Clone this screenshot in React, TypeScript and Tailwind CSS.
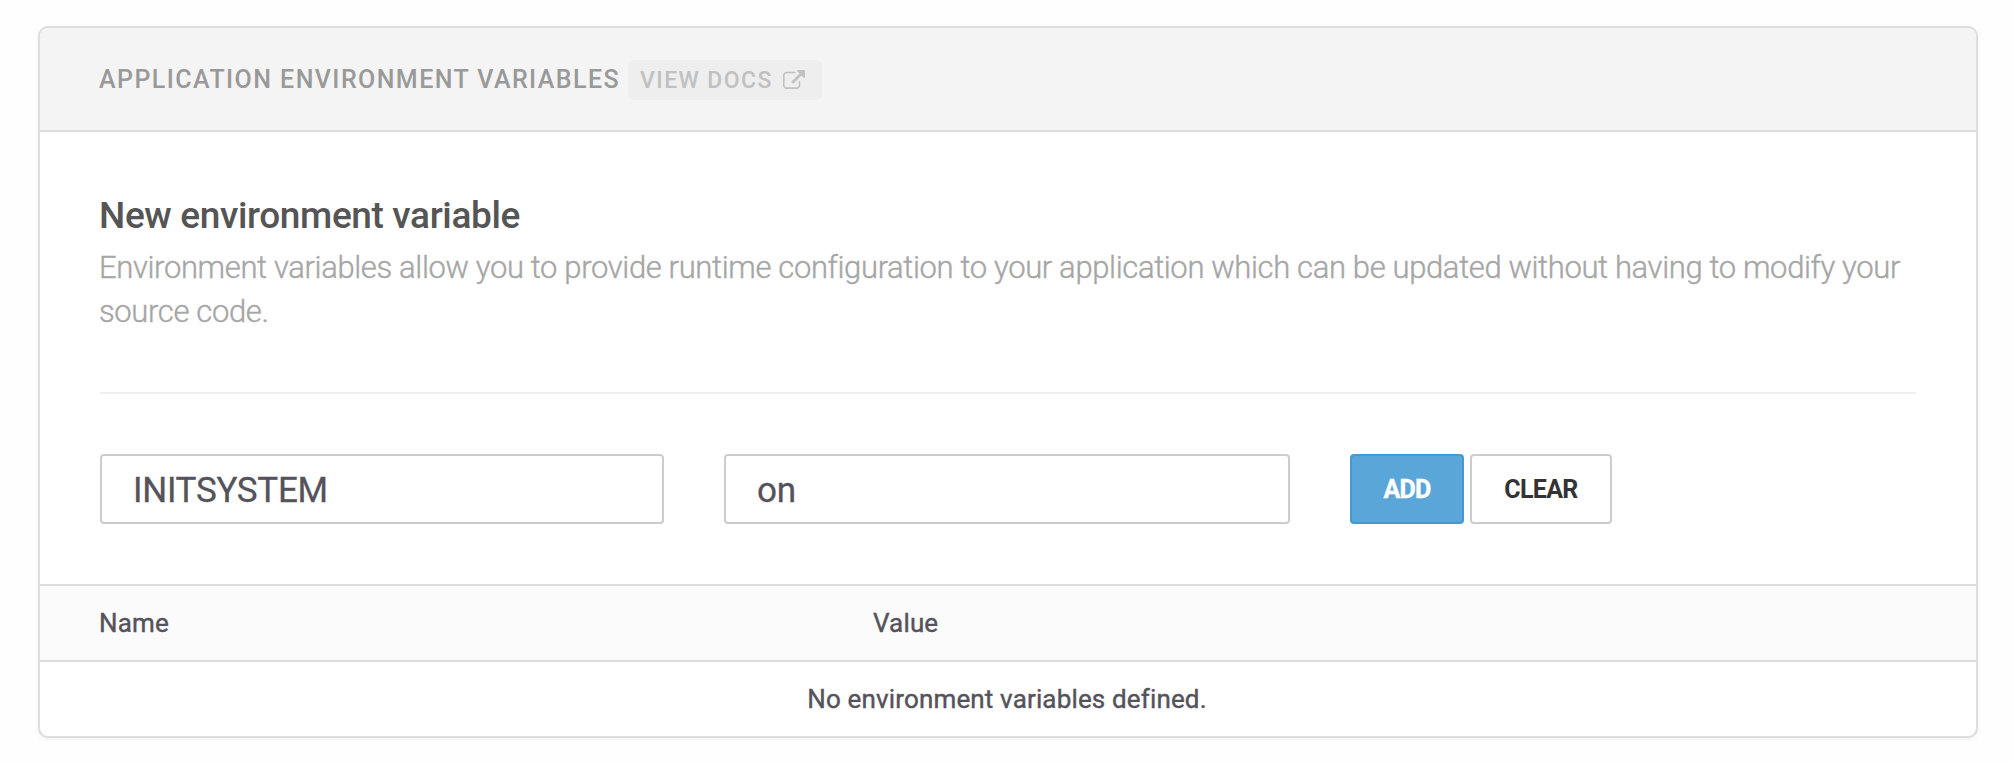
import React, { useState } from "react";

function ExternalLinkIcon() {
  return (
    <svg viewBox="0 0 1792 1536" className="h-[19px] w-[22px] fill-current" aria-hidden="true">
      <path d="M1408 928v320q0 119-84.5 203.5t-203.5 84.5h-832q-119 0-203.5-84.5t-84.5-203.5v-832q0-119 84.5-203.5t203.5-84.5h704q14 0 23 9t9 23v64q0 14-9 23t-23 9h-704q-66 0-113 47t-47 113v832q0 66 47 113t113 47h832q66 0 113-47t47-113v-320q0-14 9-23t23-9h64q14 0 23 9t9 23zm384-864v512q0 26-19 45t-45 19-45-19l-176-176-652 652q-10 10-23 10t-23-10l-114-114q-10-10-10-23t10-23l652-652-176-176q-19-19-19-45t19-45 45-19h512q26 0 45 19t19 45z" />
    </svg>
  );
}

const inputClass =
  "h-[70px] rounded-[4px] border-2 border-[#ccc] bg-white px-[31px] pt-[3px] text-[35px] tracking-[-0.3px] text-[#54525b] outline-none [-webkit-text-stroke:0.3px]";

export default function App() {
  const [name, setName] = useState("INITSYSTEM");
  const [value, setValue] = useState("on");

  return (
    <main className="min-h-[762px] bg-[#fefefe] pt-[26px] pl-[38px] font-['Roboto',sans-serif]">
      <section className="h-[712px] w-[1940px] overflow-hidden rounded-[10px] border-2 border-[#ddd] bg-white shadow-[0_2px_4px_rgba(0,0,0,0.05)]">
        <header className="flex h-[104px] items-center border-b-2 border-[#ddd] bg-[#f4f4f4] pt-[2px] pl-[59px]">
          <h2 className="w-[529px] text-[25px] leading-[30px] font-medium tracking-[1.43px] text-[#999]">
            APPLICATION ENVIRONMENT VARIABLES
          </h2>
          <a className="flex h-[40px] w-[194px] items-center rounded-[6px] bg-[#eee] pt-px pl-[12px] text-[23px] leading-[40px] font-medium tracking-[1.4px] text-[#c1c1c1]">
            VIEW DOCS
            <span className="ml-[10px] -mt-[3px]">
              <ExternalLinkIcon />
            </span>
          </a>
        </header>

        <div className="h-[452px] pt-[62px] pr-[60px] pl-[59px]">
          <h3 className="mb-2 text-[37px] leading-[44px] font-medium tracking-[-0.37px] text-[#555]">
            New environment variable
          </h3>
          <p className="text-[31px] leading-[44px] font-light tracking-[-0.36px] whitespace-nowrap text-[#a6a6a6] [-webkit-text-stroke:0.4px]">
            Environment variables allow you to provide runtime configuration to your application which can be updated without having to modify your
            <br />
            source code.
          </p>
          <hr className="mt-[58px] ml-px border-t-2 border-[#eee]" />
          <form className="mt-[60px] ml-px flex" onSubmit={(e) => e.preventDefault()}>
            <input
              aria-label="Name"
              className={`${inputClass} w-[564px]`}
              value={name}
              onChange={(e) => setName(e.target.value)}
            />
            <input
              aria-label="Value"
              className={`${inputClass} ml-[60px] w-[566px]`}
              value={value}
              onChange={(e) => setValue(e.target.value)}
            />
            <button className="ml-[60px] h-[70px] w-[114px] rounded-[4px] border-2 border-[#4499d2] bg-[#5ba6d9] pt-[2px] text-[25px] font-bold tracking-[-0.7px] text-white [-webkit-text-stroke:0.4px]">
              ADD
            </button>
            <button
              type="button"
              className="ml-[6px] h-[70px] w-[142px] rounded-[4px] border-2 border-[#ccc] bg-white pt-[2px] text-[25px] font-bold tracking-[-0.7px] text-[#333]"
            >
              CLEAR
            </button>
          </form>
        </div>

        <div className="grid h-[78px] grid-cols-[774px_1fr] items-center border-y-2 border-[#ddd] bg-[#fbfbfb] pl-[59px] text-[26px] leading-[30px] tracking-[0.15px] text-[#54525b] [-webkit-text-stroke:0.4px]">
          <span>Name</span>
          <span>Value</span>
        </div>
        <div className="flex h-[74px] items-center justify-center pr-[2px] text-[26px] leading-[30px] tracking-[0.15px] text-[#54525b] [-webkit-text-stroke:0.4px]">
          No environment variables defined.
        </div>
      </section>
    </main>
  );
}
